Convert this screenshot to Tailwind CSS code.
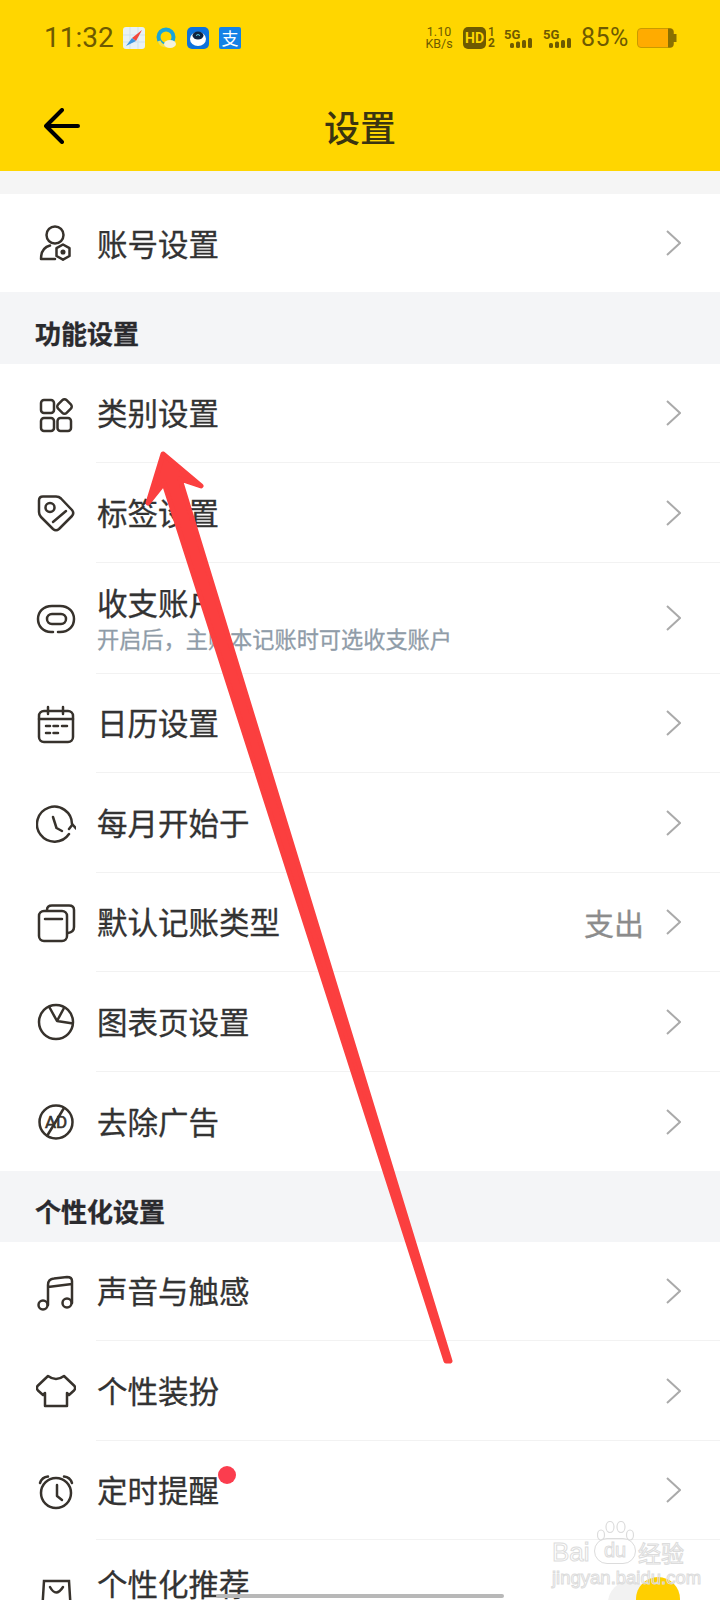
<!DOCTYPE html><html lang="zh-CN">
<head>
  <meta charset="UTF-8" />
  <meta name="viewport" content="width=device-width, initial-scale=1" />
  <title>设置</title>
  <script src="https://cdn.jsdelivr.net/npm/@tailwindcss/browser@4"></script>
</head>
<body class="bg-[#f5f5f5] font-['Noto_Sans_CJK_SC',sans-serif] text-[#333]">
<div class="relative w-[720px] h-[1600px] overflow-hidden">

  <!-- header -->
  <header class="h-[171px] bg-[#ffd600] pt-[26px]">
    <div class="flex items-center h-[23px] pl-[44px] font-['Roboto',sans-serif] text-[#6e5a00]">
      <span class="text-[28px] leading-[23px] w-[79px]">11:32</span>
      <div class="flex gap-[10px] items-center">
        <svg class="w-[22px] h-[22px]" viewBox="0 0 22 22"><rect width="22" height="22" rx="3" fill="#e8f1f6"/><path d="M7 0V22M0 8H22M15 0V22M0 15H22" stroke="#cfe3ee"/><path d="M19 3L13 14L9 11Z" fill="#f2483c"/><path d="M3 19L9 11L13 14Z" fill="#3a94e0"/></svg>
        <svg class="w-[22px] h-[22px]" viewBox="0 0 22 22"><circle cx="11" cy="10" r="7.5" fill="none" stroke="#19a4d8" stroke-width="4"/><path d="M4 14A8 8 0 0 0 12 19" fill="none" stroke="#f6e04e" stroke-width="3"/><ellipse cx="15" cy="17" rx="6" ry="4" fill="#f6f3dc"/></svg>
        <svg class="w-[22px] h-[22px]" viewBox="0 0 22 22"><rect width="22" height="22" rx="5" fill="#0e72dc"/><ellipse cx="11" cy="12" rx="8" ry="7" fill="#fff"/><ellipse cx="11" cy="8.5" rx="5.5" ry="4" fill="#10233f"/><path d="M9 8.5Q11 6.5 13 8.5" stroke="#5fd8f0" fill="none"/></svg>
        <span class="flex items-center justify-center w-[22px] h-[22px] rounded-[2px] bg-[#1482e6] text-white text-[17px] leading-none font-['Noto_Sans_CJK_SC',sans-serif]">支</span>
      </div>
      <div class="flex items-center ml-[184px]">
        <div class="w-[28px] text-center text-[12.5px] leading-[12px]">1.10<br />KB/s</div>
        <div class="ml-[10px] flex items-center justify-center w-[23px] h-[22px] rounded-[5px] bg-[#6e5a00] text-[#ffd600] text-[14px] font-bold leading-none">HD</div>
        <div class="ml-[1px] w-[9px] text-center text-[12px] leading-[11px] font-medium">1<br /><span class="font-bold">2</span></div>
        <svg class="ml-[8px] w-[30px] h-[22px]" viewBox="0 0 30 22" fill="#6e5a00"><text x="0" y="12" font-size="13" font-weight="700" font-family="Roboto">5G</text><rect x="6" y="16" width="4" height="5" rx="1.5"/><rect x="12" y="14.500" width="4" height="6.500" rx="1.5"/><rect x="18" y="13" width="4" height="8" rx="1.5"/><rect x="24" y="11" width="4" height="10" rx="1.5"/></svg>
        <svg class="ml-[9px] w-[30px] h-[22px]" viewBox="0 0 30 22" fill="#6e5a00"><text x="0" y="12" font-size="13" font-weight="700" font-family="Roboto">5G</text><rect x="6" y="16" width="4" height="5" rx="1.5"/><rect x="12" y="14.500" width="4" height="6.500" rx="1.5"/><rect x="18" y="13" width="4" height="8" rx="1.5"/><rect x="24" y="11" width="4" height="10" rx="1.5"/></svg>
        <span class="ml-[8px] text-[25px] leading-[23px] tracking-[0.5px]">85%</span>
        <svg class="ml-[8px] w-[40px] h-[22px]" viewBox="0 0 40 22"><rect x="0.5" y="1.5" width="36" height="19" rx="3.5" fill="#ffab00" stroke="#c99a00"/><path d="M31 1.5H33A3.500 3.500 0 0 1 36.500 5V7H39.500V15H36.500V17A3.500 3.500 0 0 1 33 20.500H31Z" fill="#8a7000"/></svg>
      </div>
    </div>
    <div class="relative flex items-center justify-center h-[60px] mt-[47px]">
      <svg class="absolute left-[44px] w-[36px] h-[36px]" viewBox="0 0 36 36" fill="none" stroke="#000" stroke-width="4" stroke-linecap="round" stroke-linejoin="round"><path d="M18 2L2 18L18 34M2 18H34"/></svg>
      <h1 class="text-[36px] leading-[60px] font-medium text-[#3a3410]">设置</h1>
    </div>
  </header>

  <main class="pt-[23px] [-webkit-text-stroke:0.3px]">
    <!-- 账号 -->
    <a class="flex h-[98px] bg-white">
      <div class="w-[96px] pl-[36px] flex items-center">
        <svg class="w-[40px] h-[40px]" viewBox="0 0 40 40" fill="none" stroke="#37322c" stroke-width="2.500" stroke-linejoin="round" stroke-linecap="round"><circle cx="19" cy="12" r="8.500"/><path d="M14 22.500C8 24 5 29 5 36H19"/><path d="M27 21.500L33.500 25.200V33L27 36.700L20.500 33V25.200Z"/><circle cx="27" cy="29" r="1.300" fill="#37322c"/></svg>
      </div>
      <div class="flex-1 flex items-center justify-between pr-[39px]">
        <span class="ml-[1px] mt-[1px] text-[30.5px]">账号设置</span>
        <svg class="w-[15px] h-[26px]" viewBox="0 0 15 26" fill="none" stroke="#aaa" stroke-width="2"><path d="M1 1L14 13L1 25"/></svg>
      </div>
    </a>

    <div class="h-[72px] pt-[8px] flex items-center pl-[35px] bg-[#f4f5f7] text-[26px] font-bold text-[#2a2a2e]">功能设置</div>

    <a class="flex h-[99px] bg-white">
      <div class="w-[96px] pl-[36px] flex items-center">
        <svg class="w-[40px] h-[40px]" viewBox="0 0 40 40" fill="none" stroke="#37322c" stroke-width="2.500" stroke-linejoin="round"><rect x="5" y="6" width="13" height="13" rx="3"/><rect x="5" y="24" width="13" height="13" rx="3"/><rect x="21.500" y="24" width="13.500" height="13" rx="3"/><rect x="22.500" y="6.500" width="12" height="12" rx="3" transform="rotate(45 28.500 12.500)"/></svg>
      </div>
      <div class="flex-1 flex items-center justify-between pr-[39px] border-b border-[#f2f2f2]">
        <span class="ml-[1px] text-[30.5px]">类别设置</span>
        <svg class="w-[15px] h-[26px]" viewBox="0 0 15 26" fill="none" stroke="#aaa" stroke-width="2"><path d="M1 1L14 13L1 25"/></svg>
      </div>
    </a>
    <a class="flex h-[100px] bg-white">
      <div class="w-[96px] pl-[36px] flex items-center">
        <svg class="w-[40px] h-[40px]" viewBox="0 0 40 40" fill="none" stroke="#37322c" stroke-width="2.500" stroke-linejoin="round" stroke-linecap="round"><path d="M7 3.500H20Q23 3.500 25 5.500L36 17Q38.500 20 36 23L23 36Q20 38.500 17 36L5 24Q3 22 3 19V7.500Q3 3.500 7 3.500Z"/><circle cx="14" cy="14.500" r="4.500"/><path d="M17 29L30 18"/></svg>
      </div>
      <div class="flex-1 flex items-center justify-between pr-[39px] border-b border-[#f2f2f2]">
        <span class="ml-[1px] text-[30.5px]">标签设置</span>
        <svg class="w-[15px] h-[26px]" viewBox="0 0 15 26" fill="none" stroke="#aaa" stroke-width="2"><path d="M1 1L14 13L1 25"/></svg>
      </div>
    </a>
    <a class="flex h-[111px] bg-white">
      <div class="w-[96px] pl-[36px] flex items-center">
        <svg class="w-[40px] h-[40px]" viewBox="0 0 40 40" fill="none" stroke="#37322c" stroke-width="2.500" stroke-linecap="round"><path d="M16 7H24C33 7 38 13 38 20C38 27 33 33 24 33H22M17 33H15C7 33 2 27 2 20C2 13 7 7 16 7"/><rect x="11" y="15" width="19" height="10" rx="5"/></svg>
      </div>
      <div class="flex-1 flex items-center justify-between pr-[39px] border-b border-[#f2f2f2]">
        <div class="flex flex-col ml-[1px]">
          <span class="text-[30.5px] leading-[36px] mt-[4px]">收支账户</span>
          <span class="text-[22.2px] leading-[36px] text-[#8f9ca8]">开启后，主账本记账时可选收支账户</span>
        </div>
        <svg class="w-[15px] h-[26px]" viewBox="0 0 15 26" fill="none" stroke="#aaa" stroke-width="2"><path d="M1 1L14 13L1 25"/></svg>
      </div>
    </a>
    <a class="flex h-[99px] bg-white">
      <div class="w-[96px] pl-[36px] flex items-center">
        <svg class="w-[40px] h-[40px]" viewBox="0 0 40 40" fill="none" stroke="#37322c" stroke-width="2.500" stroke-linecap="round"><rect x="3" y="7" width="34" height="31" rx="5"/><path d="M12 3V10M27 3V10M3 15H37"/><path d="M10 22H14M17.500 22H22M26 22H31M10 29H14M17.500 29H22"/></svg>
      </div>
      <div class="flex-1 flex items-center justify-between pr-[39px] border-b border-[#f2f2f2]">
        <span class="ml-[1px] text-[30.5px]">日历设置</span>
        <svg class="w-[15px] h-[26px]" viewBox="0 0 15 26" fill="none" stroke="#aaa" stroke-width="2"><path d="M1 1L14 13L1 25"/></svg>
      </div>
    </a>
    <a class="flex h-[100px] bg-white">
      <div class="w-[96px] pl-[36px] flex items-center">
        <svg class="w-[40px] h-[40px]" viewBox="0 0 40 40" fill="none" stroke="#37322c" stroke-width="2.500" stroke-linecap="round" stroke-linejoin="round"><path d="M36 21A17.500 17.500 0 1 0 33 31"/><path d="M33 26L36.500 21.500L40 25.500"/><path d="M17 14L20.500 25L26 28"/></svg>
      </div>
      <div class="flex-1 flex items-center justify-between pr-[39px] border-b border-[#f2f2f2]">
        <span class="ml-[1px] text-[30.5px]">每月开始于</span>
        <svg class="w-[15px] h-[26px]" viewBox="0 0 15 26" fill="none" stroke="#aaa" stroke-width="2"><path d="M1 1L14 13L1 25"/></svg>
      </div>
    </a>
    <a class="flex h-[99px] bg-white">
      <div class="w-[96px] pl-[36px] flex items-center">
        <svg class="w-[40px] h-[40px]" viewBox="0 0 40 40" fill="none" stroke="#37322c" stroke-width="2.500" stroke-linecap="round"><rect x="3" y="8" width="28" height="30" rx="5"/><path d="M11 7Q11 2.500 16 2.500H33Q38 2.500 38 7V24Q38 29 32 30"/><path d="M9 16H26"/></svg>
      </div>
      <div class="flex-1 flex items-center pr-[39px] border-b border-[#f2f2f2]">
        <span class="ml-[1px] text-[30.5px]">默认记账类型</span>
        <span class="ml-auto mr-[22px] text-[30px] text-[#8c8c8c]">支出</span>
        <svg class="w-[15px] h-[26px]" viewBox="0 0 15 26" fill="none" stroke="#aaa" stroke-width="2"><path d="M1 1L14 13L1 25"/></svg>
      </div>
    </a>
    <a class="flex h-[100px] bg-white">
      <div class="w-[96px] pl-[36px] flex items-center">
        <svg class="w-[40px] h-[40px]" viewBox="0 0 40 40" fill="none" stroke="#37322c" stroke-width="2.500" stroke-linejoin="round"><circle cx="20" cy="20" r="17"/><path d="M13 4.500L21 19L28 6M21 19L37 21.500"/></svg>
      </div>
      <div class="flex-1 flex items-center justify-between pr-[39px] border-b border-[#f2f2f2]">
        <span class="ml-[1px] text-[30.5px]">图表页设置</span>
        <svg class="w-[15px] h-[26px]" viewBox="0 0 15 26" fill="none" stroke="#aaa" stroke-width="2"><path d="M1 1L14 13L1 25"/></svg>
      </div>
    </a>
    <a class="flex h-[99px] bg-white">
      <div class="w-[96px] pl-[36px] flex items-center">
        <svg class="w-[40px] h-[40px]" viewBox="0 0 40 40" fill="none" stroke="#37322c" stroke-width="2.500"><circle cx="20" cy="20" r="16.500"/><path d="M28 6L11 34"/><text x="20" y="26" text-anchor="middle" font-size="17" font-family="Roboto" fill="#37322c" stroke-width="0.600">AD</text></svg>
      </div>
      <div class="flex-1 flex items-center justify-between pr-[39px]">
        <span class="ml-[1px] text-[30.5px]">去除广告</span>
        <svg class="w-[15px] h-[26px]" viewBox="0 0 15 26" fill="none" stroke="#aaa" stroke-width="2"><path d="M1 1L14 13L1 25"/></svg>
      </div>
    </a>

    <div class="h-[71px] pt-[8px] flex items-center pl-[35px] bg-[#f4f5f7] text-[26px] font-bold text-[#2a2a2e]">个性化设置</div>

    <a class="flex h-[99px] bg-white">
      <div class="w-[96px] pl-[36px] flex items-center">
        <svg class="w-[40px] h-[40px]" viewBox="0 0 40 40" fill="none" stroke="#37322c" stroke-width="2.500" stroke-linecap="round"><circle cx="7" cy="33" r="4.500"/><circle cx="31" cy="31" r="4.500"/><path d="M12 33V13Q12 7 18 6.500L31 5Q36 5 36 9V31M12 15L36 12"/></svg>
      </div>
      <div class="flex-1 flex items-center justify-between pr-[39px] border-b border-[#f2f2f2]">
        <span class="ml-[1px] text-[30.5px]">声音与触感</span>
        <svg class="w-[15px] h-[26px]" viewBox="0 0 15 26" fill="none" stroke="#aaa" stroke-width="2"><path d="M1 1L14 13L1 25"/></svg>
      </div>
    </a>
    <a class="flex h-[100px] bg-white">
      <div class="w-[96px] pl-[36px] flex items-center">
        <svg class="w-[40px] h-[40px]" viewBox="0 0 40 40" fill="none" stroke="#37322c" stroke-width="2.500" stroke-linejoin="round"><path d="M12 5Q20 11 28 5L38.500 15Q40 17.500 38 19.500L33 24L31 22V35H9V22L7 24L2 19.500Q0 17.500 1.500 15Z"/></svg>
      </div>
      <div class="flex-1 flex items-center justify-between pr-[39px] border-b border-[#f2f2f2]">
        <span class="ml-[1px] text-[30.5px]">个性装扮</span>
        <svg class="w-[15px] h-[26px]" viewBox="0 0 15 26" fill="none" stroke="#aaa" stroke-width="2"><path d="M1 1L14 13L1 25"/></svg>
      </div>
    </a>
    <a class="flex h-[99px] bg-white">
      <div class="w-[96px] pl-[36px] flex items-center">
        <svg class="w-[40px] h-[40px]" viewBox="0 0 40 40" fill="none" stroke="#37322c" stroke-width="2.500" stroke-linecap="round" stroke-linejoin="round"><circle cx="20" cy="22" r="15"/><path d="M21 14V25L26 29"/><path d="M4 12Q6 6 12 5.500M36 12Q34 6 28 5.500"/></svg>
      </div>
      <div class="flex-1 flex items-center justify-between pr-[39px] border-b border-[#f2f2f2]">
        <span class="relative ml-[1px] text-[30.5px]">定时提醒<span class="absolute right-[-17px] top-[-1px] w-[18px] h-[18px] rounded-full bg-[#fb3d4e]"></span></span>
        <svg class="w-[15px] h-[26px]" viewBox="0 0 15 26" fill="none" stroke="#aaa" stroke-width="2"><path d="M1 1L14 13L1 25"/></svg>
      </div>
    </a>
    <a class="flex h-[111px] bg-white">
      <div class="w-[96px] pl-[36px] flex items-center">
        <svg class="w-[40px] h-[40px]" viewBox="0 0 40 40" fill="none" stroke="#37322c" stroke-width="2.500" stroke-linecap="round"><path d="M8 5H33L35 37H6Z"/><path d="M14 11Q20 22 27 11"/></svg>
      </div>
      <div class="flex-1 flex items-start pt-[25px] pr-[39px]">
        <span class="ml-[1px] text-[30.5px] leading-[36px]">个性化推荐</span>
      </div>
    </a>
  </main>

  <!-- red arrow drawn over the page -->
  <svg class="absolute left-0 top-0 w-[720px] h-[1600px] pointer-events-none" viewBox="0 0 720 1600"><path d="M163 454L201 486L180 479L450 1361L446 1361L164 483L148 503Z" fill="#fb3f3f" stroke="#fb3f3f" stroke-width="5" stroke-linejoin="round"/></svg>

  <!-- floating button, home bar, watermark -->
  <div class="absolute left-[608px] top-[1581px] w-[44px] h-[44px] rounded-full bg-[#f2f2f2]"></div>
  <div class="absolute left-[636px] top-[1577px] w-[44px] h-[44px] rounded-full bg-[#ffcf00]"></div>
  <div class="absolute left-[216px] top-[1594px] w-[288px] h-[4px] rounded-full bg-[#b8b8b8]"></div>
  <div class="absolute left-[552px] top-[1521px] w-[132px] h-[66px] font-['Liberation_Sans',sans-serif] text-transparent [-webkit-text-stroke:1px_#dcdcdc]">
    <svg class="absolute left-[45px] top-0 w-[38px] h-[34px]" viewBox="0 0 38 34" fill="#fff" stroke="#dcdcdc" stroke-width="1.200"><ellipse cx="4" cy="14" rx="3.500" ry="5"/><ellipse cx="13" cy="6" rx="4" ry="5.500"/><ellipse cx="24" cy="6" rx="4" ry="5.500"/><ellipse cx="33" cy="14" rx="3.500" ry="5"/></svg>
    <span class="absolute left-0 top-[17px] text-[26px] leading-[28px]">Bai</span>
    <span class="absolute left-[42px] top-[17px] w-[42px] h-[26px] rounded-full border border-[#dcdcdc] text-center text-[20px] leading-[22px]">du</span>
    <span class="absolute left-[86px] top-[17px] text-[23px] leading-[28px] font-['Noto_Sans_CJK_SC',sans-serif]">经验</span>
    <span class="absolute left-0 top-[47px] text-[18.5px] leading-[20px]">jingyan.baidu.com</span>
  </div>
</div>
</body>
</html>
